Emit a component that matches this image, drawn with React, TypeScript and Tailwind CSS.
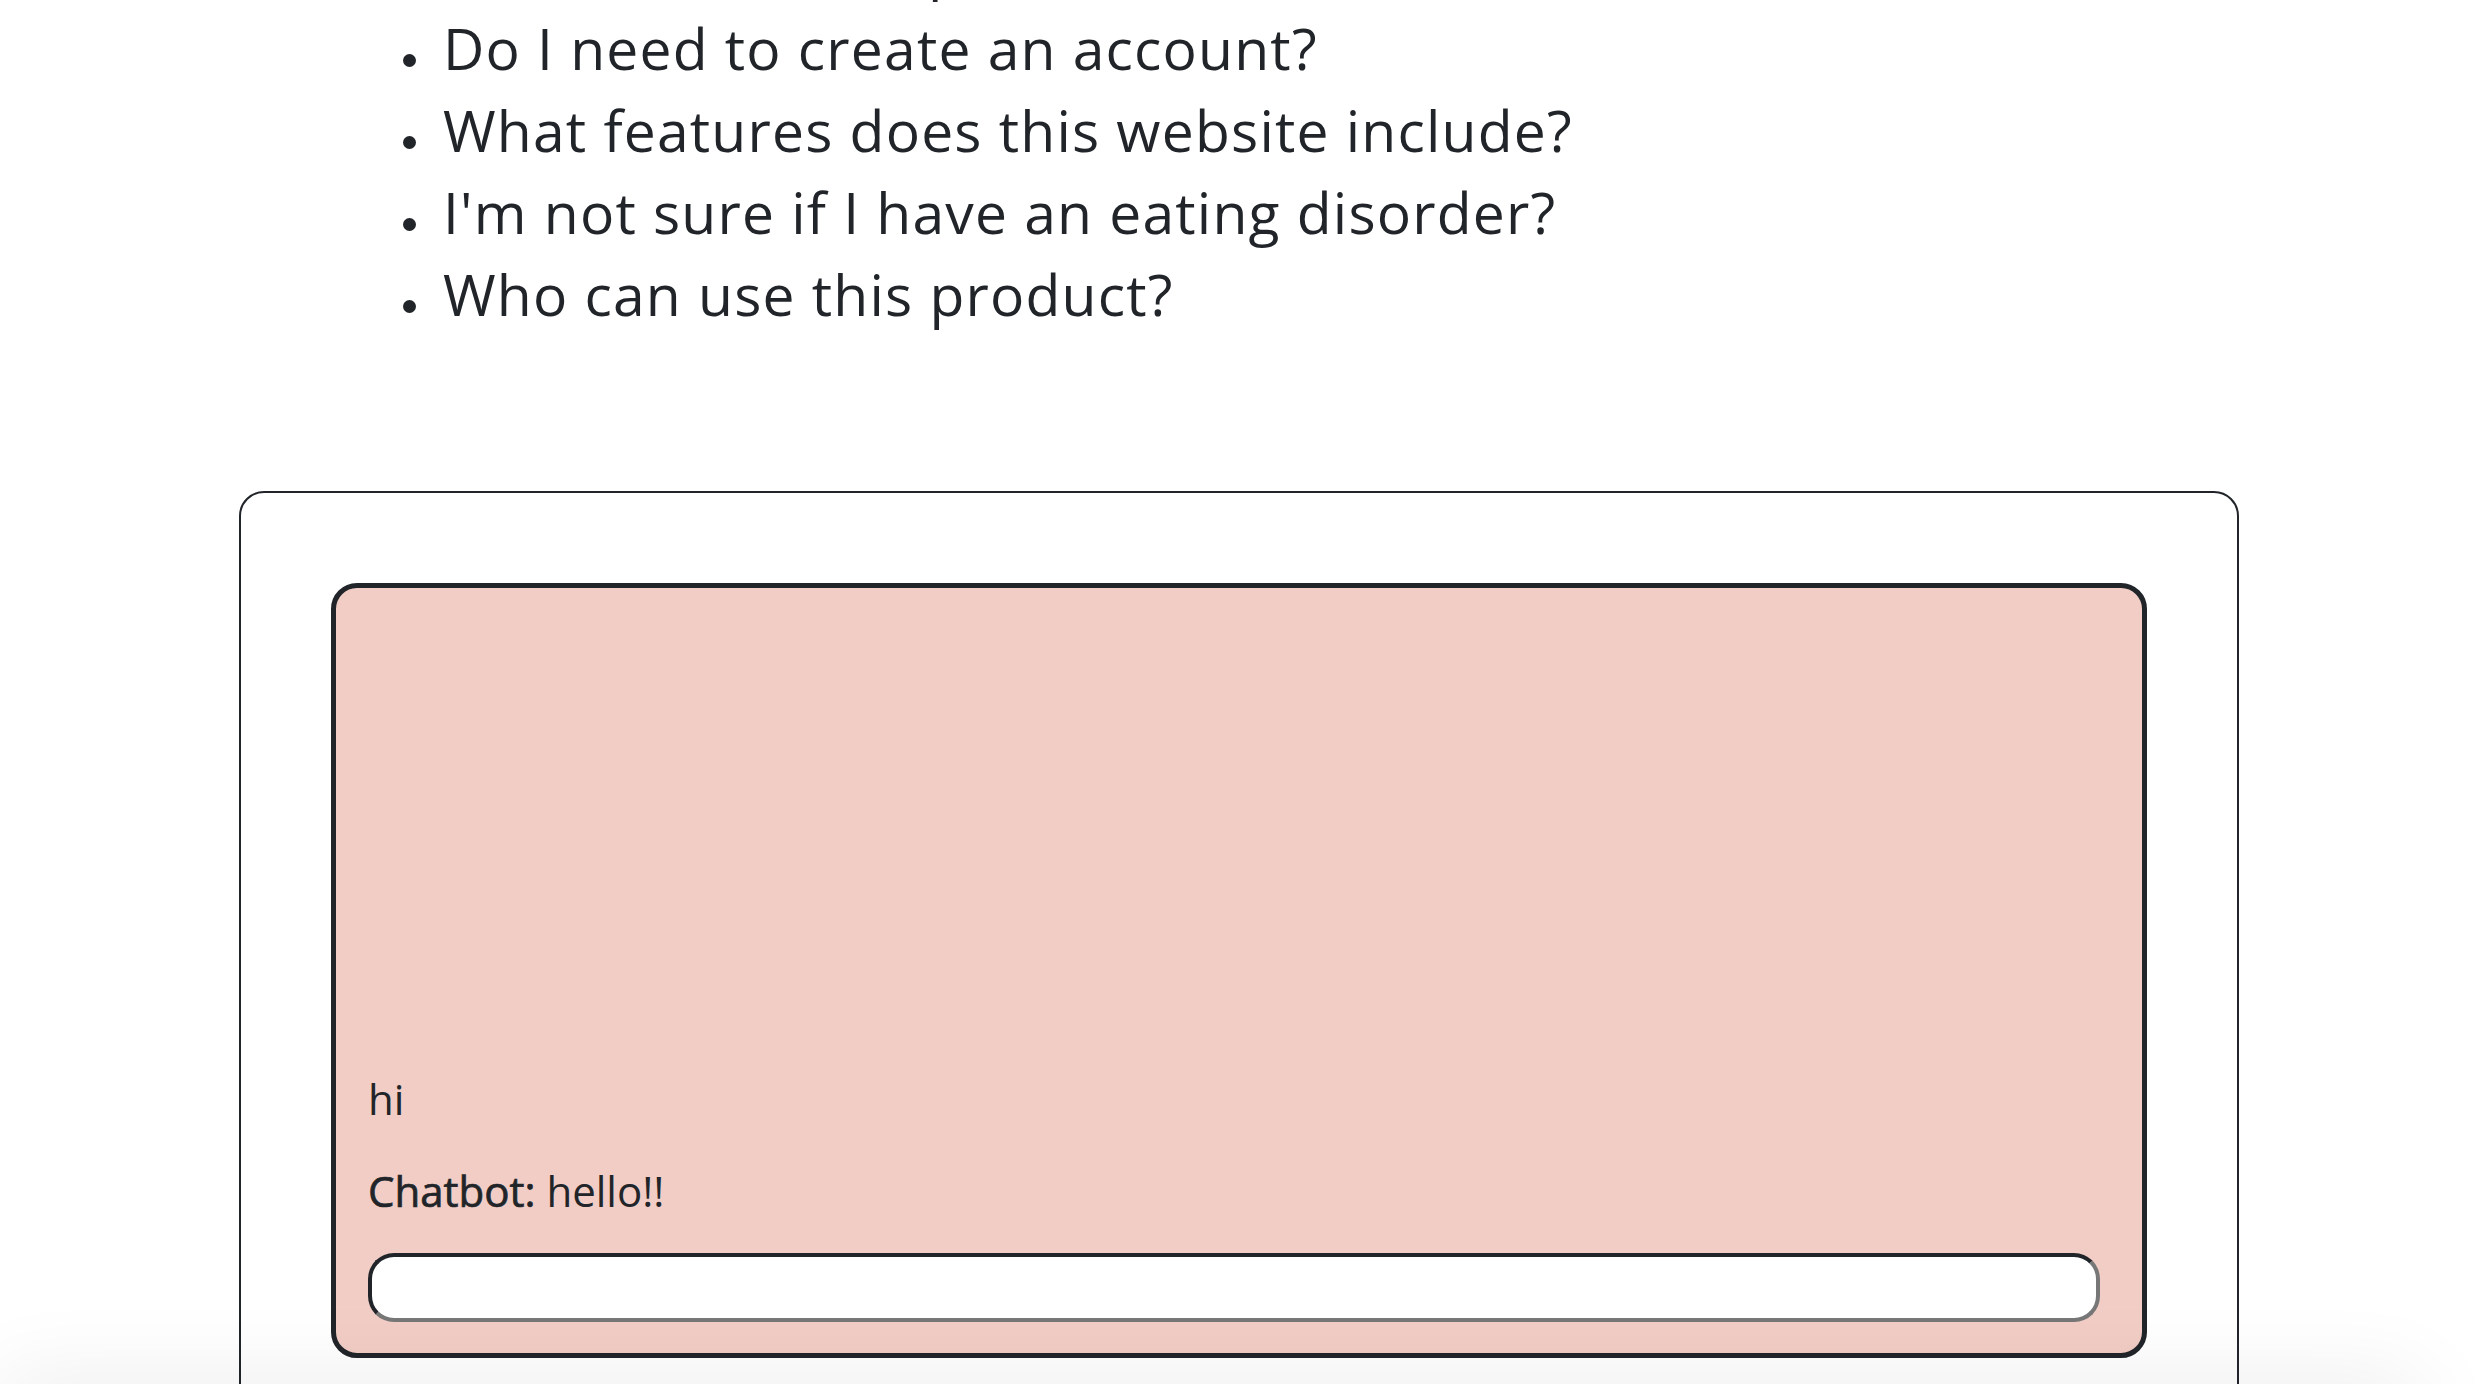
import { useState } from 'react';

const faqs = [
    'Who created this platform?',
    'Do I need to create an account?',
    'What features does this website include?',
    "I'm not sure if I have an eating disorder?",
    'Who can use this product?',
];

export default function App() {
    const [messages] = useState([
        { from: 'user', text: 'hi' },
        { from: 'bot', text: 'hello!!' },
    ]);
    const [draft, setDraft] = useState('');

    return (
        <div className="min-h-screen bg-white text-[#212529] font-['Open_Sans',sans-serif] overflow-hidden">
            {/* FAQ list, page is scrolled so the first item is cut off */}
            <ul className="mt-[-75px] pl-[443px] list-none">
                {faqs.map(q => (
                    <li key={q} className="relative text-[57px] leading-[82px] tracking-[1.2px]">
                        <span className="absolute left-[-40px] top-[47px] h-[13px] w-[13px] rounded-full bg-[#212529]" />
                        {q}
                    </li>
                ))}
            </ul>

            <div className="mt-[156px] mx-auto w-[2000px] border-2 border-[#212529] rounded-[25px] p-[90px] pb-[120px]">
                <div className="h-[775px] w-[1816px] border-[5px] border-[#212529] rounded-[26px] bg-[#f1cdc5] px-[32px] pb-[31px] flex flex-col justify-end">
                    {messages.map((m, i) => (
                        <p key={i} className="text-[42px] leading-[60px] mb-[32px]">
                            {m.from === 'bot' && <span className="[-webkit-text-stroke:0.7px_#212529]">Chatbot: </span>}
                            {m.text}
                        </p>
                    ))}
                    <input
                        value={draft}
                        onChange={e => setDraft(e.target.value)}
                        className="h-[69px] w-[1732px] rounded-[26px] bg-white border-4 border-t-[#212529] border-l-[#212529] border-b-[#777777] border-r-[#777777] outline-none px-4 text-[32px]"
                    />
                </div>
            </div>

            {/* soft shadow of something sitting just below the fold */}
            <div className="fixed left-0 bottom-[-60px] h-[60px] w-[2420px] bg-white shadow-[0_0_90px_rgba(0,0,0,0.09)]" />
        </div>
    );
}
